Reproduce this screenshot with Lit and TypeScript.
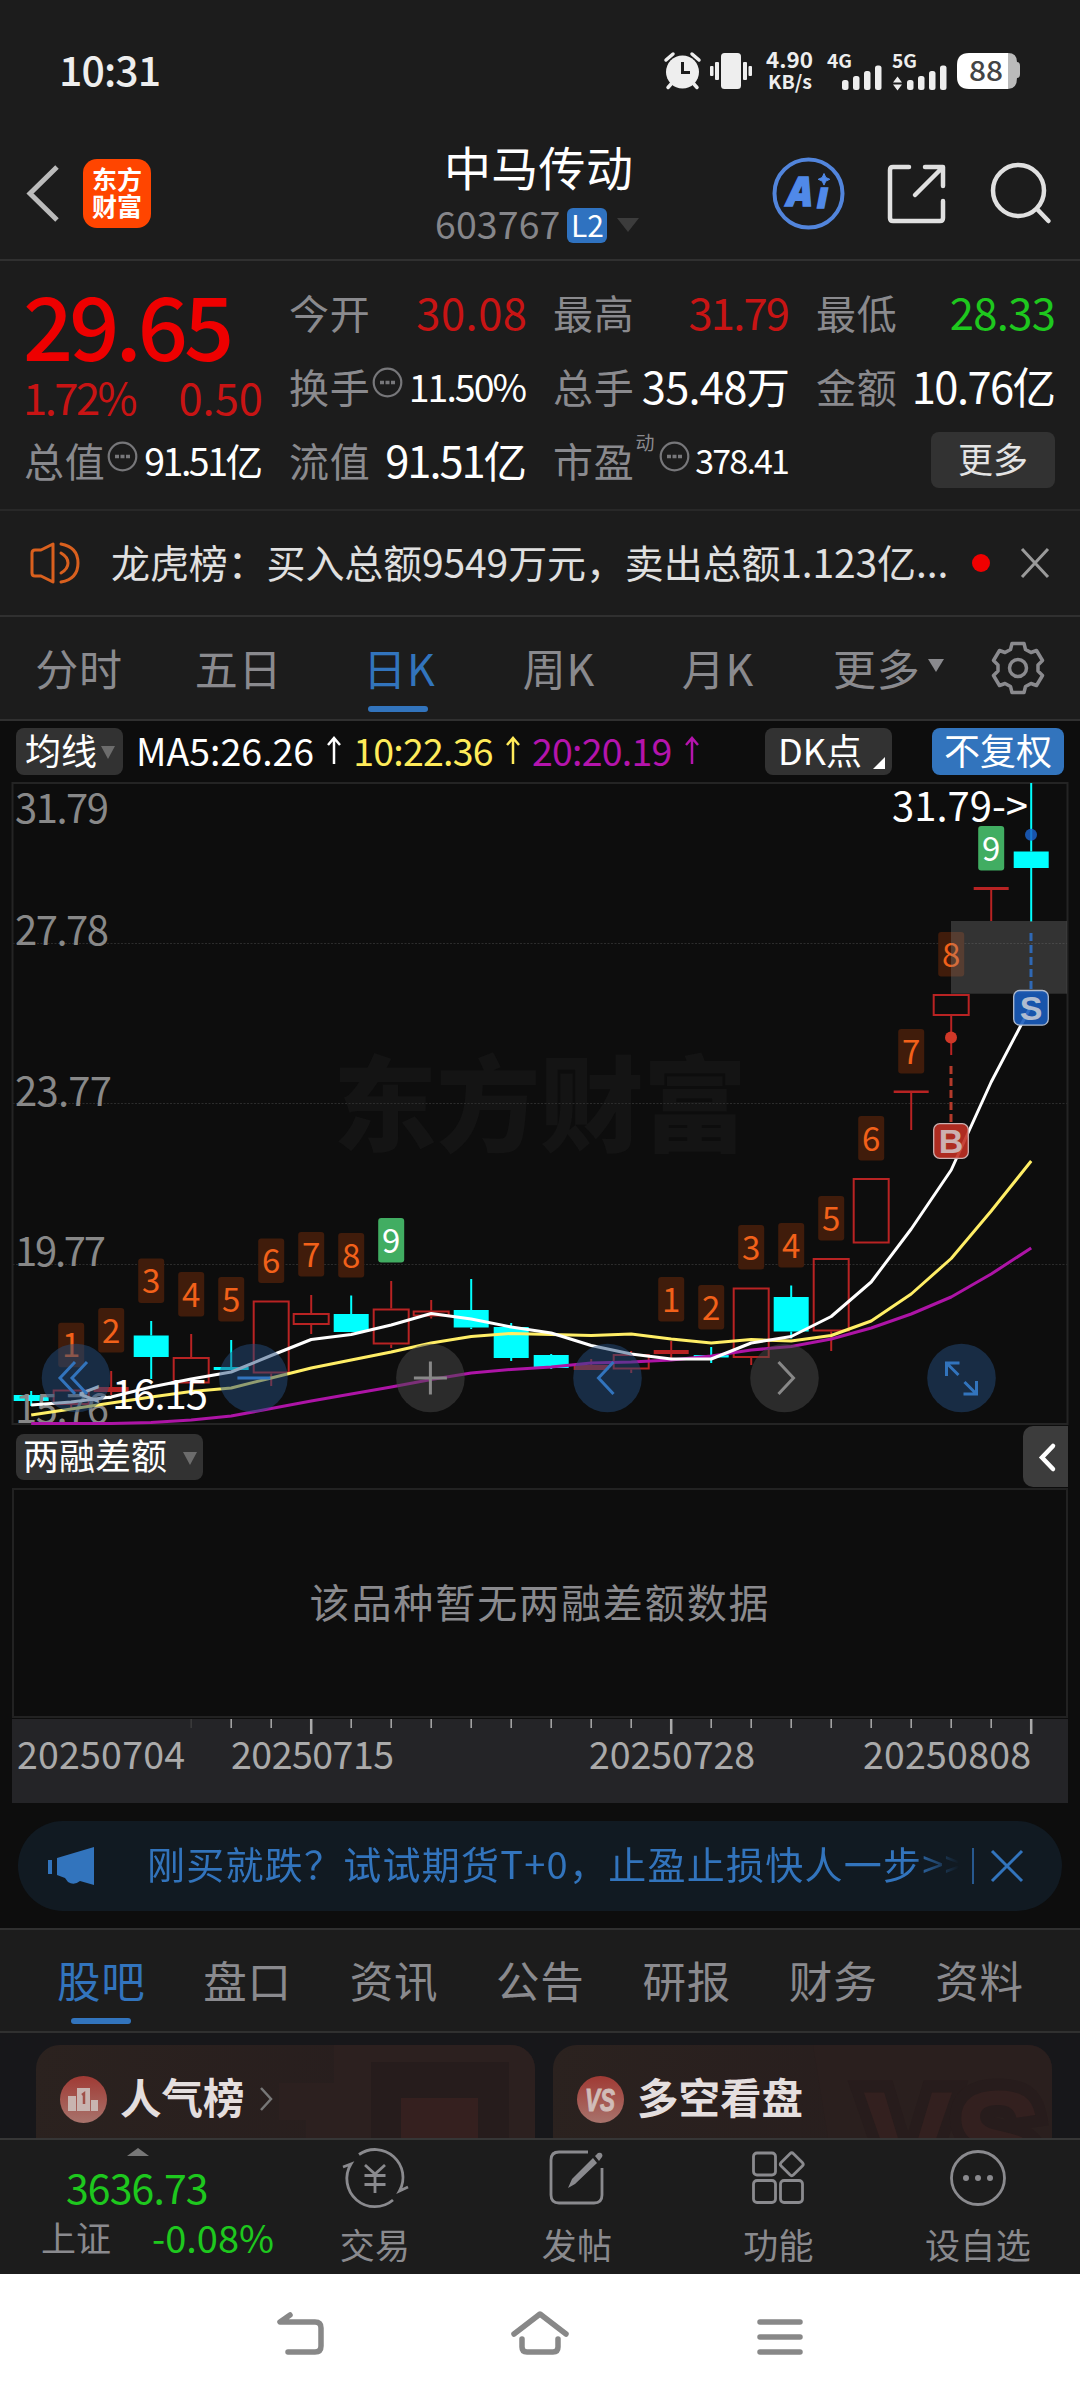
import { LitElement, html, svg, css } from "lit";
import { customElement } from "lit/decorators.js";

const base = css`
  :host { display: block; font-family: "Noto Sans CJK SC", "Noto Sans", sans-serif; color: #fff; }
  * { box-sizing: border-box; }
  svg { display: block; flex: none; overflow: visible; }
  .row { display: flex; align-items: center; }
  div, span, b { white-space: nowrap; }
`;

@customElement("status-bar")
class StatusBar extends LitElement {
  static styles = [base, css`
    .bar { height: 142px; padding: 0 58px 0 59px; justify-content: space-between; }
    .time { font: 500 41px/60px "Noto Sans CJK SC", sans-serif; color: #eee; letter-spacing: -.9px; margin-top: -7px; }
  `];
  render() {
    return html`<div class="bar row"><span class="time">10:31</span>
      <svg width="358" height="44" viewBox="664 49 358 44" fill="#eee" font-family="Noto Sans CJK SC, sans-serif" font-weight="700">
        <circle cx="682.5" cy="72" r="16.5"/>
        <path d="M666 60l7-6M699 60l-7-6M672 83l-4 4.500M693 83l4 4.500" stroke="#eee" stroke-width="3.500" stroke-linecap="round"/>
        <path d="M682.500 62v10.500h7.500" fill="none" stroke="#1c1c1c" stroke-width="3"/>
        <rect x="721" y="53" width="20" height="36" rx="3.500"/>
        <rect x="715" y="62" width="4" height="18" rx="1"/><rect x="710" y="66" width="3.500" height="10" rx="1"/>
        <rect x="743" y="62" width="4" height="18" rx="1"/><rect x="748.500" y="66" width="3.500" height="10" rx="1"/>
        <text x="766" y="67.500" font-size="21.500" textLength="47" lengthAdjust="spacingAndGlyphs">4.90</text>
        <text x="768" y="88.500" font-size="19" textLength="44" lengthAdjust="spacingAndGlyphs">KB/s</text>
        <text x="827" y="67.500" font-size="18.500" textLength="25" lengthAdjust="spacingAndGlyphs">4G</text>
        <text x="892" y="67.500" font-size="18.500" textLength="25" lengthAdjust="spacingAndGlyphs">5G</text>
        ${[842, 907].map(x => svg`
          <rect x=${x} y="80" width="6.500" height="10" rx="2.500"/><rect x=${x + 11} y="76" width="6.500" height="14" rx="2.500"/>
          <rect x=${x + 22} y="71" width="6.500" height="19" rx="2.500"/><rect x=${x + 33} y="65.500" width="6.500" height="24.500" rx="2.500"/>`)}
        <path d="M893 82.500l4.500-6 4.500 6zM893 84.500l4.500 6 4.500-6z"/>
        <path d="M1008 53q9 0 9 9 3 0 3 4v8q0 4-3 4 0 11-9 11z" fill="#bbb"/>
        <path d="M969 53h39v36h-39q-12 0-12-12V65q0-12 12-12z" fill="#fff"/>
        <text x="969" y="81" font-size="28" font-weight="500" fill="#444" textLength="34" lengthAdjust="spacingAndGlyphs">88</text>
      </svg></div>`;
  }
}

@customElement("title-bar")
class TitleBar extends LitElement {
  static styles = [base, css`
    .bar { height: 119px; display: grid; grid-template-columns: 27px 44px 12px 68px 1fr 312px; border-bottom: 2px solid #303030; }
    .back { grid-column: 2; margin-top: 22px; }
    .logo { grid-column: 4; margin-top: 17px; width: 68px; height: 69px; border-radius: 14px; background: #ff4500; font: 700 25px/27px "Noto Sans CJK SC", sans-serif; text-align: center; padding-top: 6px; }
    .mid { padding-left: 284px; }
    .name { display: block; font-size: 47px; line-height: 60px; margin: -6px 0 0 9px; letter-spacing: .3px; }
    .code { color: #86868a; font-size: 37.500px; line-height: 50px; gap: 7px; margin-top: 6px; }
    .code span { letter-spacing: .1px; margin-top: -4px; }
    .l2 { background: #2f72c0; color: #fff; border-radius: 6px; width: 40px; height: 35px; font-size: 30px; line-height: 33px; text-align: center; }
    .code svg { margin-left: 2px; }
    .tools { margin-top: 14px; }
  `];
  render() {
    return html`<div class="bar">
      <svg class="back" width="34" height="58" fill="none" stroke="#bbb" stroke-width="5"><path d="M30 3L3 29.500 30 56"/></svg>
      <div class="logo">东方<br>财富</div>
      <div class="mid"><span class="name">中马传动</span>
        <div class="code row"><span>603767</span><div class="l2">L2</div>
          <svg width="24" height="14"><path d="M1 0h22L12 14z" fill="#3c3c3c"/></svg></div></div>
      <svg class="tools" width="312" height="76" viewBox="768 156 312 76" fill="none">
        <circle cx="808.500" cy="193.500" r="34" stroke="#5285dc" stroke-width="4"/>
        <g font-family="Open Sans, sans-serif" font-weight="800" font-style="italic" fill="#5089e8" stroke="#5089e8" stroke-width="1.500">
          <text x="787" y="206" font-size="41" textLength="26" lengthAdjust="spacingAndGlyphs">A</text>
          <text x="817" y="208" font-size="36" textLength="11" lengthAdjust="spacingAndGlyphs">ı</text></g>
        <path d="M824 173.500l1.800 4 4 1.800-4 1.800-1.800 4-1.800-4-4-1.800 4-1.800z" fill="#5089e8" stroke="#5089e8"/>
        <g stroke="#e0e0e0" stroke-width="4.500" stroke-linecap="round" stroke-linejoin="round">
          <path d="M909 167H893q-3 0-3 3v48q0 3 3 3h47q3 0 3-3V201M925 167h18v19M942 168l-27 27"/>
          <circle cx="1018.500" cy="190.500" r="25.500"/><path d="M1037 209l11.500 12"/>
        </g>
      </svg></div>`;
  }
}

const more = html`<svg width="31" height="31" fill="none" stroke="#77777a" stroke-width="2.200"><circle cx="15.500" cy="15.500" r="13.800"/><path d="M8 15.500h4M13.500 15.500h4M19 15.500h4" stroke-width="3.500"/></svg>`;

@customElement("quote-board")
class QuoteBoard extends LitElement {
  static styles = [base, css`
    .board { height: 250px; border-bottom: 2px solid #282828; padding: 15px 24px 0 25px; display: grid; grid-template-columns: 238px 237px 236px 239px; column-gap: 27px; grid-template-rows: 74px 74px 76px; }
    .cell { display: flex; align-items: center; justify-content: space-between; height: 70px; padding-top: 1px; margin-left: -1px; }
    .label { color: #8a8a8e; font-size: 40px; letter-spacing: .8px; display: flex; line-height: 60px; }
    .label svg { margin: 11px 0 0 1px; }
    .label sup { font-size: 19px; line-height: 20px; margin: 2px 3px 0 1px; }
    .red { color: #c81414; } .green { color: #1ec81e; }
    .v { font-size: 43.500px; }
    .s { font-size: 37.500px; }
    .xs { font-size: 34px; }
    .lead { grid-row: 1 / 3; }
    .price { font-weight: 500; font-size: 88px; line-height: 100px; letter-spacing: -3.900px; color: #ee0000; display: block; margin: -3px 0 0 -2px; }
    .chg { display: flex; justify-content: space-between; font-size: 43.500px; line-height: 60px; margin: -6px 0 0 -2px; }
    .pct { letter-spacing: -2.500px; }
    .btn { background: #323232; border-radius: 8px; width: 124px; height: 56px; font-size: 35px; line-height: 51px; text-align: center; color: #e4e4e4; margin: 1px 1px 0 auto; }
  `];
  render() {
    const cell = (label: unknown, cls: string, value: string, ls: number) => html`<div class="cell"><span class="label">${label}</span>
      <span class=${cls} style="letter-spacing:${ls}px;margin-right:${-ls}px">${value}</span></div>`;
    return html`<div class="board">
      <div class="lead"><b class="price">29.65</b><div class="chg red"><span class="pct">1.72%</span><span>0.50</span></div></div>
      ${cell("今开", "v red", "30.08", .5)}
      ${cell("最高", "v red", "31.79", -1.8)}
      ${cell("最低", "v green", "28.33", -.6)}
      ${cell(html`换手${more}`, "s", "11.50%", -2)}
      ${cell("总手", "v", "35.48万", -.8)}
      ${cell("金额", "v", "10.76亿", -1.6)}
      ${cell(html`总值${more}`, "s", "91.51亿", -2.5)}
      ${cell("流值", "v", "91.51亿", -2.1)}
      ${cell(html`市盈<sup>动</sup>${more}`, "xs", "378.41", -1.8)}
      <div class="cell"><div class="btn">更多</div></div>
    </div>`;
  }
}

@customElement("notice-bar")
class NoticeBar extends LitElement {
  static styles = [base, css`
    .bar { height: 106px; border-bottom: 2px solid #303030; padding: 0 31px 0 29px; }
    span { font-size: 39px; line-height: 60px; letter-spacing: -.12px; color: #e0e0e0; margin: -5px 0 0 30px; width: 861px; }
    .x { margin-left: auto; }
  `];
  render() {
    return html`<div class="bar row">
      <svg width="52" height="44" fill="none" stroke="#d9601e" stroke-width="3" stroke-linecap="round" stroke-linejoin="round">
        <path d="M3 12q0-3 3-3h6L24 3v38L12 35H6q-3 0-3-3zM32 12q7 4 7 10t-7 10M32 3q17 3 17 19T32 41"/></svg>
      <span>龙虎榜：买入总额9549万元，卖出总额1.123亿...</span>
      <svg width="18" height="18"><circle cx="9" cy="9" r="9" fill="#f00000"/></svg>
      <svg class="x" width="28" height="30" stroke="#9a9a9a" stroke-width="3"><path d="M1 1l26 28M27 1L1 29"/></svg></div>`;
  }
}

@customElement("period-tabs")
class PeriodTabs extends LitElement {
  static styles = [base, css`
    .bar { height: 104px; border-bottom: 2px solid #303030; display: grid; grid-template-columns: 158px 161px 161px 158px 160px 169px 1fr; color: #8a8a8e; }
    .tab { font-size: 43px; line-height: 60px; text-align: center; padding-top: 20px; letter-spacing: .8px; }
    .on { color: #3274bd; display: flex; flex-direction: column; align-items: center; }
    .on::after { content: ""; width: 60px; height: 6px; border-radius: 3px; background: #3274bd; margin: 9px 3px 0 0; }
    .more { display: flex; padding-left: 35px; }
    .more svg { margin: 22px 0 0 7px; }
    .gear { margin: 24px 0 0 24px; }
  `];
  render() {
    return html`<div class="bar"><div class="tab">分时</div><div class="tab">五日</div><div class="tab on">日K</div><div class="tab">周K</div><div class="tab">月K</div>
      <div class="tab more">更多<svg width="16" height="13"><path d="M0 0h16L8 13z" fill="#8a8a8e"/></svg></div>
      <svg class="gear" width="54" height="54" viewBox="-27 -27 54 54" fill="none" stroke="#8a8a8e" stroke-width="3.500" stroke-linejoin="round">
        <circle r="8.500"/><path d="M-6-24.500H6L7.500-18.500 13-15.500 18.500-17.500 24.500-7.500 20-3V3L24.500 7.500 18.500 17.500 13 15.500 7.500 18.500 6 24.500H-6L-7.500 18.500-13 15.500-18.500 17.500-24.500 7.500-20 3V-3L-24.500-7.500-18.500-17.500-13-15.500-7.500-18.500Z"/></svg></div>`;
  }
}

type Kind = "c" | "r" | "rf";
interface Candle { k: Kind; t: number; b: number; hi: number; lo: number; }
const c = (k: Kind, t: number, b: number, hi: number, lo: number): Candle => ({ k, t, b, hi, lo });
const candles: Candle[] = [
  c("c", 1395, 1401, 1391, 1406), c("r", 1389.5, 1405, 1389.5, 1409), c("rf", 1387, 1392, 1371, 1395), c("c", 1335.5, 1357, 1321, 1379),
  c("r", 1357, 1383.5, 1334, 1383), c("c", 1367, 1370, 1340, 1370), c("r", 1300.5, 1373.5, 1301, 1386), c("r", 1313, 1325, 1295, 1334),
  c("c", 1314, 1332, 1295.5, 1332), c("r", 1308.5, 1344.5, 1281, 1348), c("r", 1310.5, 1316.5, 1300, 1318.5), c("c", 1310, 1327.5, 1279, 1329),
  c("c", 1327, 1358, 1323, 1361), c("c", 1355, 1368, 1354, 1369), c("rf", 1365, 1370, 1359, 1370), c("r", 1354, 1369.5, 1351, 1373),
  c("rf", 1350, 1354, 1341, 1358), c("c", 1355, 1357.5, 1347, 1363), c("r", 1287.5, 1358, 1288, 1365), c("c", 1297, 1331.5, 1285.5, 1338.500),
  c("r", 1258, 1331.5, 1258, 1351), c("r", 1178, 1243.5, 1180, 1243), c("rf", 1090.5, 1093, 1091, 1130), c("r", 994, 1016, 994, 1055),
  c("rf", 887, 890, 888, 921), c("c", 851.5, 868, 783, 921.5),
];
const ma5 = [1405, 1402, 1397, 1387, 1379, 1372, 1355.5, 1339.5, 1334.5, 1325, 1313.5, 1319, 1327, 1333, 1345.5, 1354, 1359, 1359, 1343, 1336.5, 1316.5, 1282, 1229, 1170, 1082, 1005.7];
const ma10 = [1415, 1409, 1403, 1397, 1391.5, 1388, 1378, 1368, 1360, 1352, 1343, 1336.5, 1333.5, 1334.5, 1335.5, 1334, 1339, 1343, 1339.5, 1341, 1335.5, 1321, 1294, 1258.5, 1211, 1161];
const ma20 = [1423.5, 1423.5, 1423.5, 1422.5, 1420, 1416, 1408.5, 1401, 1394, 1387, 1379.5, 1373, 1369.5, 1367, 1363, 1362, 1360, 1356, 1350, 1346.5, 1339, 1328, 1314, 1297, 1274, 1248];
const marks: [number, number, number][] = [[1, 1322.7, 1], [2, 1308, 2], [3, 1258.5, 3], [4, 1272, 4], [5, 1277, 5], [6, 1238.5, 6], [7, 1232, 7], [8, 1233, 8], [9, 1218, 9],
  [16, 1277, 1], [17, 1285, 2], [18, 1225, 3], [19, 1223, 4], [20, 1196, 5], [21, 1116, 6], [22, 1029, 7], [23, 932, 8], [24, 826, 9]];
const X = (i: number) => 31.2 + i * 40;
const line = (v: number[]) => v.map((y, i) => `${X(i)},${y}`).join(" ");

@customElement("k-chart")
class KChart extends LitElement {
  static styles = [base, css`
    :host { background: #0d0d0d; }
    .legend { height: 61px; padding: 0 16px 1px; font-size: 37.500px; line-height: 46px; letter-spacing: -.75px; }
    .legend > span { margin-top: -3px; }
    .legend > svg { margin-left: 12px; }
    .plot { overflow: hidden; }
    .pill { background: #323232; border-radius: 8px; height: 47px; font-size: 36px; line-height: 43px; letter-spacing: 0; display: flex; padding: 0 8px 0 9px; }
    .caret { margin: 18px 0 0 4px; }
    .dk { margin-left: auto; padding: 0 7px 0 13px; width: 127px; justify-content: space-between; }
    .blue { background: #3274bd; margin-left: 40px; width: 132px; padding-left: 12px; }
    .tri { align-self: flex-end; margin-bottom: 0; }
    .w { margin-left: 13px; letter-spacing: 0; } .y { margin-left: 11px; color: #ffeb5a; } .p { margin-left: 11px; color: #b414ac; }
    .sub { height: 63px; padding: 0 12px 0 16px; justify-content: space-between; }
    .ind { width: 187px; height: 46px; padding-left: 7px; line-height: 41px; }
    .ind .caret { margin-left: 16px; }
    .fold { width: 45px; height: 61px; background: #3c3c3c; border-radius: 10px 0 0 10px; padding: 17px 0 0 15px; }
    .empty { margin: 0 12px; height: 230px; border: 2px solid #222; text-align: center; color: #8a8a8e; font-size: 40px; line-height: 223px; letter-spacing: 1.900px; }
    .dates { margin: 1px 12px 0; height: 84px; background: #242427; }
  `];
  candle(d: Candle, i: number) {
    const x = X(i), col = d.k === "c" ? "#00ffff" : "#b82323";
    const wick = (a: number, b: number) => b > a ? svg`<line x1=${x} x2=${x} y1=${a} y2=${b} stroke=${col} stroke-width="2"/>` : null;
    return svg`${wick(d.hi, d.t)}${wick(d.b, d.lo)}${d.k === "r"
      ? svg`<rect x=${x - 17.5} y=${d.t + 1} width="35" height=${d.b - d.t - 2} fill="none" stroke=${col} stroke-width="2"/>`
      : svg`<rect x=${x - 17.5} y=${d.t} width="35" height=${d.b - d.t} fill=${col}/>`}`;
  }
  render() {
    const arrow = (col: string) => html`<svg width="16" height="28" fill="none" stroke=${col} stroke-width="2.500"><path d="M8 27V1M2 8l6-7 6 7"/></svg>`;
    const caret = html`<svg class="caret" width="14" height="13"><path d="M0 0h14L7 13z" fill="#6c6c6c"/></svg>`;
    const button = (x: number, on: boolean, d: string) => svg`<circle cx=${x} cy="1378" r="34.300" fill=${on ? "rgba(35,75,124,.5)" : "rgba(74,74,74,.5)"}/>
      <path d=${d} transform="translate(${x} 1378)" fill="none" stroke=${on ? "#3274bd" : "#888"} stroke-width="3"/>`;
    return html`
      <div class="legend row"><div class="pill">均线${caret}</div>
        <span class="w">MA5:26.26</span>${arrow("#fff")}<span class="y">10:22.36</span>${arrow("#ffeb5a")}<span class="p">20:20.19</span>${arrow("#b414ac")}
        <div class="pill dk">DK点<svg class="tri" width="12" height="18"><path d="M12 0v12H0z" fill="#fff"/></svg></div><div class="pill blue">不复权</div></div>
      <svg class="plot" width="1080" height="643" viewBox="0 782 1080 643" font-family="Noto Sans CJK SC, sans-serif">
        <text x="333" y="1144" font-size="104" font-weight="900" fill="#141414" textLength="414">东方财富</text>
        <path d="M12.500 943.500H1067M12.500 1103.500H1067M12.500 1264.500H1067" stroke="#2c2c2c" stroke-dasharray="2 1.500"/>
        <rect x="12.500" y="783" width="1055" height="641" fill="none" stroke="#242424" stroke-width="2"/>
        ${candles.map((d, i) => this.candle(d, i))}
        ${marks.map(([i, y, n]) => svg`<rect x=${X(i) - 13} y=${y} width="26" height="44.500" rx="3" fill=${n === 9 ? "#41ad62" : "#401c0b"}/>
          <text x=${X(i)} y=${y + 34.5} font-size="33" text-anchor="middle" fill=${n === 9 ? "#fff" : "#f2611a"}>${n}</text>`)}
        <rect x="951" y="921" width="116" height="72.700" fill="rgba(140,140,140,.3)"/>
        <g fill="#888" font-size="40">
          <text x="15" y="822.500" textLength="94">31.79</text><text x="15" y="945" textLength="94">27.78</text><text x="15" y="1106" textLength="97">23.77</text>
          <text x="15" y="1266" textLength="91">19.77</text><text x="15" y="1423" textLength="94">15.76</text></g>
        <text x="892" y="821" font-size="40" fill="#fff" textLength="136">31.79-&gt;</text>
        <g fill="none" stroke-width="3" stroke-linejoin="round">
          <polyline points=${line(ma20)} stroke="#ad14a6"/><polyline points=${line(ma10)} stroke="#ffee66"/><polyline points=${line(ma5)} stroke="#fff"/></g>
        <text x="78" y="1409" font-size="40" fill="#fff" textLength="130">&lt;-16.15</text>
        <circle cx="951" cy="1037.500" r="6" fill="#d03828"/><circle cx="1031" cy="834.700" r="6" fill="#1b62c8" opacity=".85"/>
        <path d="M951 1066v57" stroke="#b33a2b" stroke-width="3" stroke-dasharray="8 4"/><path d="M1031 933v57" stroke="#2f68b4" stroke-width="3" stroke-dasharray="8 4"/>
        <g font-family="Liberation Sans, sans-serif" font-weight="700" font-size="34" text-anchor="middle" stroke-width="1.300">
          <rect x="933.700" y="1123.700" width="34.600" height="34.600" rx="6" fill="#c03024" fill-opacity=".9" stroke="#ccb0b0"/><text x="951" y="1153" fill="#ccb0b0">B</text>
          <rect x="1013.700" y="990.500" width="34.600" height="34.600" rx="6" fill="#1a5cbc" fill-opacity=".9" stroke="#b0bcd0"/><text x="1031" y="1020" fill="#b0bcd0">S</text></g>
        ${button(76, true, "M-1-16l-15 16 15 16M11-16L-4 0 11 16")}
        ${button(253.4, true, "M-16 0h33")}
        ${button(430.4, false, "M-16.500 0h33M0-16.500v33")}
        ${button(607.5, true, "M6-16L-9 0 6 16")}
        ${button(784.5, false, "M-6-16L9 0-6 16")}
        ${button(961.5, true, "M-15-2v-13h13M-15-15l12 12M15 3v13h-13M15 16l-12-12")}
      </svg>
      <div class="sub row"><div class="pill ind">两融差额${caret}</div>
        <div class="fold"><svg width="18" height="30" fill="none" stroke="#fff" stroke-width="4.500" stroke-linecap="round"><path d="M15 3L4 14.500 15 26"/></svg></div></div>
      <div class="empty">该品种暂无两融差额数据</div>
      <svg class="dates" width="1056" height="84" viewBox="12 1719 1056 84" font-family="Noto Sans CJK SC, sans-serif" font-size="37.500" fill="#aaa">
        ${candles.map((_, i) => i > 3 ? svg`<line x1=${X(i)} x2=${X(i)} y1="1719" y2=${(i - 7) % 9 ? 1728 : 1734} stroke=${i === 4 ? "#3c3c3c" : "#aaa"} stroke-width=${(i - 7) % 9 ? 1.5 : 2.5}/>` : null)}
        <text x="17" y="1768.500" textLength="168">20250704</text><text x="231" y="1768.500" textLength="163">20250715</text>
        <text x="589" y="1768.500" textLength="166">20250728</text><text x="863" y="1768.500" textLength="168">20250808</text></svg>`;
  }
}

@customElement("promo-strip")
class PromoStrip extends LitElement {
  static styles = [base, css`
    :host { background: #0d0d0d; padding: 18px 18px 17px; }
    .pill { height: 90px; border-radius: 45px; background: #111a22; color: #3274bd; padding: 0 39px 0 30px; }
    span { width: 815px; margin-left: 53px; overflow: hidden; font-size: 38px; line-height: 60px; letter-spacing: 1.250px; margin-top: -6px; -webkit-mask-image: linear-gradient(90deg, #000 765px, transparent 812px); mask-image: linear-gradient(90deg, #000 765px, transparent 812px); }
    .bar { width: 2px; height: 36px; background: #27588f; margin-left: 10px; }
    .x { margin-left: auto; }
  `];
  render() {
    return html`<div class="pill row"><svg width="46" height="40" fill="#3274bd"><path d="M0 14h4v14H0zM9 12L46 1v38l-14-4q-6 5-12 1l-3-4-8-3z"/></svg>
      <span>刚买就跌？试试期货T+0，止盈止损快人一步&gt;&gt;</span><div class="bar"></div>
      <svg class="x" width="32" height="32" stroke="#3274bd" stroke-width="3"><path d="M1 1l30 30M31 1L1 31"/></svg></div>`;
  }
}

@customElement("info-tabs")
class InfoTabs extends LitElement {
  static styles = [base, css`
    .bar { height: 105px; border: solid #303030; border-width: 2px 0; display: grid; grid-template-columns: repeat(7, 146.400px); padding-left: 28px; color: #8a8a8e; font-size: 43.500px; line-height: 60px; letter-spacing: .8px; text-align: center; }
    .tab { padding-top: 20px; }
    .on { color: #3274bd; display: flex; flex-direction: column; align-items: center; }
    .on::after { content: ""; width: 60px; height: 6px; border-radius: 3px; background: #3274bd; margin-top: 8px; }
  `];
  render() {
    return html`<div class="bar">${["股吧", "盘口", "资讯", "公告", "研报", "财务", "资料"].map((t, i) => html`<div class="tab ${i ? "" : "on"}">${t}</div>`)}</div>`;
  }
}

@customElement("feature-cards")
class FeatureCards extends LitElement {
  static styles = [base, css`
    :host { background: #17171a; }
    .wrap { height: 105px; padding: 12px 28px 0 36px; display: grid; grid-template-columns: 499px 499px; gap: 18px; overflow: hidden; }
    .card { display: grid; grid-template: 93px / 1fr; border-radius: 24px 24px 0 0; overflow: hidden; background: linear-gradient(100deg, #2b221f, #261c1d); }
    .card > * { grid-area: 1 / 1; }
    .card > svg { overflow: hidden; }
    .head { padding: 15px 0 0 24px; }
    b { font-size: 41.500px; line-height: 60px; font-weight: 700; color: #e4dede; margin: -6px 0 0 13px; }
    .go { margin-left: 14px; }
  `];
  render() {
    return html`<div class="wrap">
      <div class="card"><svg width="499" height="93"><path d="M298 0h201v93H270V75h-27V38h55z" fill="#2c201f"/><path d="M335 17h138v76H335z" fill="#261c1c"/><path d="M365 53h77v40h-77z" fill="#35201f"/></svg>
        <div class="head row"><svg width="47" height="47"><defs><linearGradient id="a" x2="0" y2="1"><stop stop-color="#a03a34"/><stop offset="1" stop-color="#a8736c"/></linearGradient></defs><circle cx="23.500" cy="23.500" r="23.500" fill="url(#a)"/>
          <path d="M8 20h8v15H8zM17 12h13v23H17zM31 24h7v11h-7z" fill="#c8b4b0"/><path d="M22 19l2-1.500V28" stroke="#a05048" stroke-width="2.500" fill="none"/></svg><b>人气榜</b>
          <svg class="go" width="14" height="24" fill="none" stroke="#777" stroke-width="2.500"><path d="M2 1l10 11L2 23"/></svg></div></div>
      <div class="card"><svg width="499" height="93"><path d="M260 0h239v93H275z" fill="#2a1f1e"/><text x="310" y="146" font-family="Liberation Sans, sans-serif" font-size="142" font-weight="700" fill="#33201f" stroke="#271c1c" stroke-width="24" paint-order="stroke" textLength="180" lengthAdjust="spacingAndGlyphs">VS</text></svg>
        <div class="head row"><svg width="47" height="47"><defs><linearGradient id="b" x2="0" y2="1"><stop stop-color="#a03a34"/><stop offset="1" stop-color="#a8736c"/></linearGradient></defs><circle cx="23.500" cy="23.500" r="23.500" fill="url(#b)"/>
          <text x="8" y="35" font-family="Liberation Sans, sans-serif" font-size="32" font-weight="700" font-style="italic" fill="#d0bcb8" stroke="#d0bcb8" textLength="30" lengthAdjust="spacingAndGlyphs">VS</text></svg><b>多空看盘</b></div></div></div>`;
  }
}

@customElement("bottom-bar")
class BottomBar extends LitElement {
  static styles = [base, css`
    .bar { height: 136px; border-top: 2px solid #363636; display: grid; grid-template-columns: 275px 200px 204px 199px 200px; color: #8a8a8e; }
    .tri { margin: 8px 0 0 127px; }
    .idx { display: block; color: #1ec81e; font-size: 41px; line-height: 50px; letter-spacing: -.9px; margin: 5px 0 0 66px; }
    .sub { display: flex; justify-content: space-between; font-size: 35px; line-height: 50px; margin: 1px 0 0 41px; width: 233px; }
    .sub b { font-weight: 400; color: #1ec81e; font-size: 38px; letter-spacing: 0; }
    .item { display: flex; flex-direction: column; align-items: center; font-size: 35px; line-height: 50px; letter-spacing: .3px; }
    .item svg { margin: 8px 0 11px; }
  `];
  render() {
    const item = (t: string, d: unknown) => html`<div class="item"><svg width="70" height="60" viewBox="-35 -30 70 60" fill="none" stroke="#8a8a8e" stroke-width="2.800">${d}</svg>${t}</div>`;
    return html`<div class="bar">
      <div><svg class="tri" width="22" height="8"><path d="M0 8L11 0l11 8z" fill="#777"/></svg><span class="idx">3636.73</span><div class="sub"><span>上证</span><b>-0.08%</b></div></div>
      ${item("交易", svg`<path d="M-16-23.500A28 28 0 0 1 24.500 13l8.500-4M18 22A28 28 0 0 1-24-14l-8 3"/><path d="M-10-13L0-4l10-9M-10.500-2.500h21M-10.500 6.500h21M0-4v19"/>`)}
      ${item("发帖", svg`<path d="M11-26H-18q-8 0-8 8v35q0 8 8 8h35q8 0 8-8V-10"/><path d="M-9 10l4-9L16-20l4 5L-2 6zM18-22l3-3q3-1 4 1t0 3l-3 4z" fill="#8a8a8e" stroke="none"/>`)}
      ${item("功能", svg`<rect x="-25.500" y="-25" width="22" height="22" rx="3.500"/><rect x="-25.500" y="2.500" width="22" height="22" rx="3.500"/><rect x="1.500" y="2.500" width="22" height="22" rx="3.500"/><rect x="4" y="-22.500" width="17.500" height="17.500" rx="2.500" transform="rotate(45 12.750 -13.750)"/>`)}
      ${item("设自选", svg`<circle r="26.500"/><g fill="#8a8a8e" stroke="none"><circle cx="-12" r="3"/><circle r="3"/><circle cx="12" r="3"/></g>`)}
    </div>`;
  }
}

@customElement("system-nav")
class SystemNav extends LitElement {
  static styles = [base, css`.bar { height: 127px; background: #fff; display: flex; justify-content: center; padding-top: 36px; }`];
  render() {
    return html`<div class="bar"><svg width="540" height="48" viewBox="270 2310 540 48" fill="none" stroke="#888" stroke-width="5.500" stroke-linecap="round" stroke-linejoin="round">
      <path d="M290 2315l-10 7h35q6 0 6 6v18q0 6-6 6h-27"/><path d="M514 2334l26-20 26 20M522 2339v8q0 5 5 5h26q5 0 5-5v-8"/><path d="M760 2322h40M760 2337h40M760 2352h40"/></svg></div>`;
  }
}

@customElement("app-root")
class AppRoot extends LitElement {
  static styles = css`:host { display: block; width: 1080px; height: 2400px; overflow: hidden; background: #1c1c1c; }`;
  render() {
    return html`<status-bar></status-bar><title-bar></title-bar><quote-board></quote-board><notice-bar></notice-bar><period-tabs></period-tabs>
      <k-chart></k-chart><promo-strip></promo-strip><info-tabs></info-tabs><feature-cards></feature-cards><bottom-bar></bottom-bar><system-nav></system-nav>`;
  }
}
